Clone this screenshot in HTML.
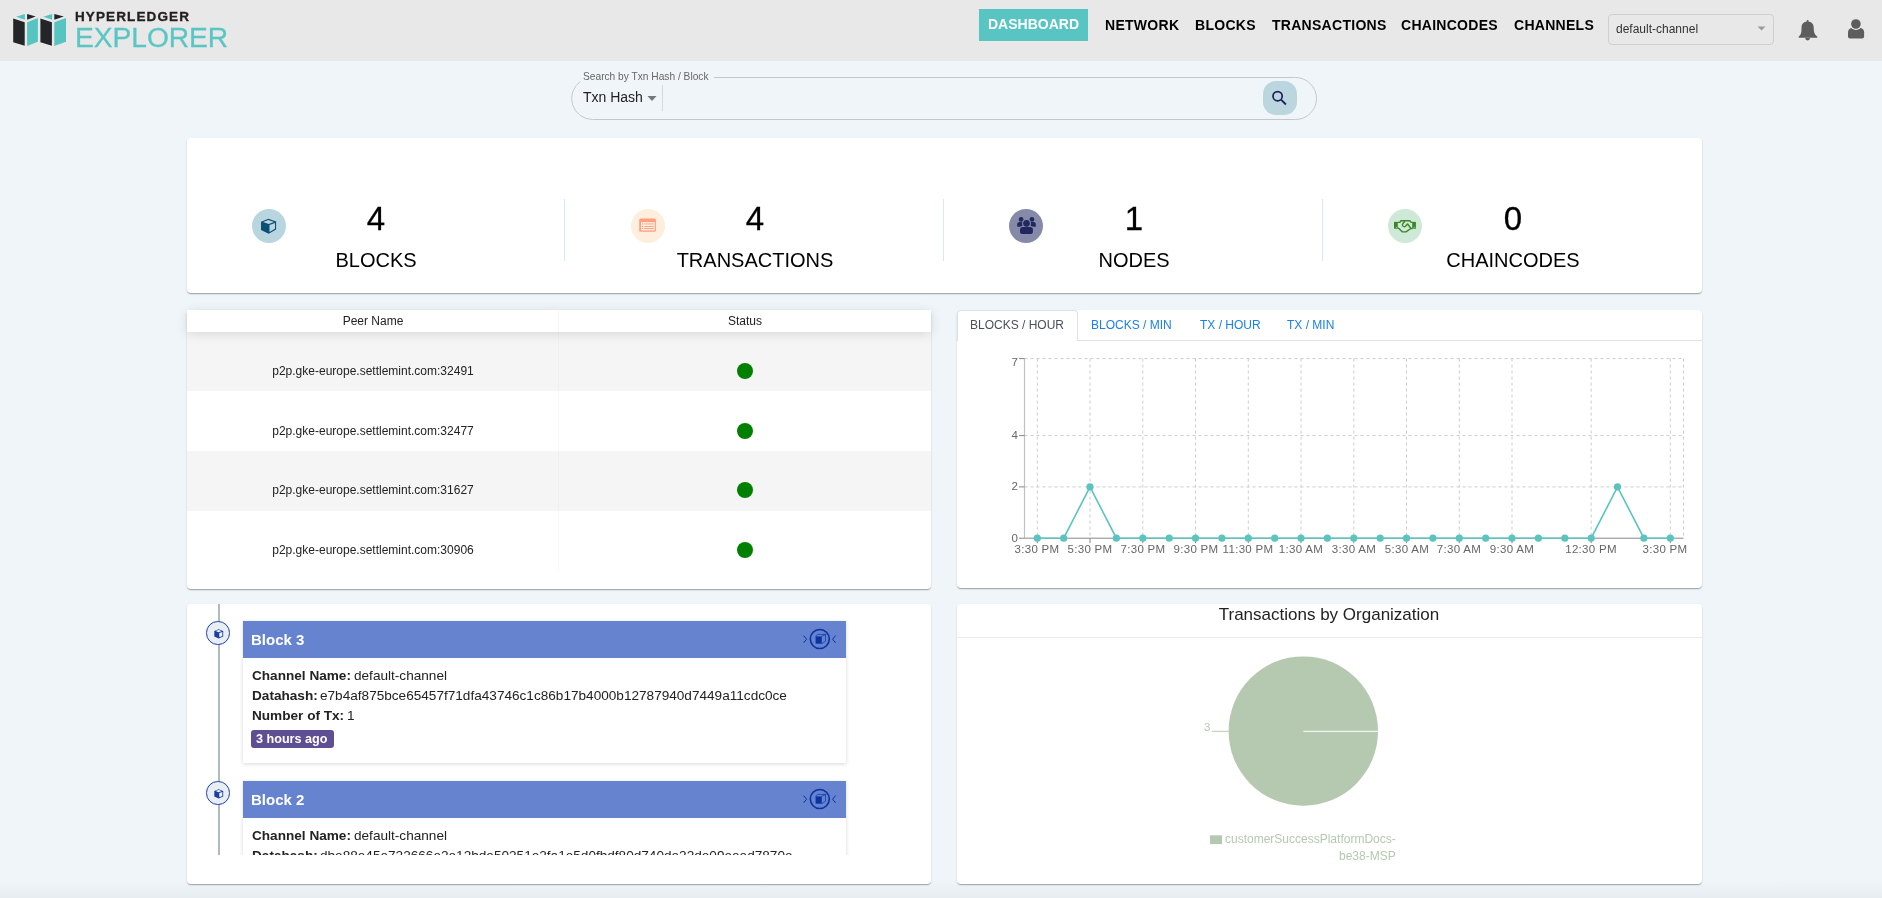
<!DOCTYPE html>
<html><head><meta charset="utf-8"><title>Hyperledger Explorer</title>
<style>
html,body{margin:0;padding:0;}
body{width:1882px;height:898px;overflow:hidden;position:relative;background:#f0f5f9;font-family:"Liberation Sans",sans-serif;}
.t{will-change:transform;position:absolute;line-height:1;white-space:nowrap;font-family:"Liberation Sans",sans-serif;}
.card{position:absolute;background:#fff;border-radius:4px;box-shadow:0 1px 2px 0 rgba(0,0,0,0.16),0 1px 1px 0 rgba(0,0,0,0.12),0 2px 1px -1px rgba(0,0,0,0.12);}
svg{position:absolute;overflow:visible;}
</style></head><body>
<div style="position:absolute;left:0px;top:0px;width:1882px;height:61px;background:#e8e8e8;"></div>
<svg style="left:0;top:0" width="80" height="60" viewBox="0 0 80 60"><polygon points="13.2,18.5 24.7,22.2 24.7,45.7 13.2,42.3" fill="#242528"/><polygon points="27.1,22.2 37.9,18 37.9,41.8 27.1,46" fill="#56c5c2"/><polygon points="16.1,16.8 24.9,13.9 24.9,19.8" fill="#56c5c2"/><polygon points="27.1,13.9 35.7,16.6 27.1,19.8" fill="#242528"/><polygon points="40.4,18.5 51.9,22.2 51.9,45.7 40.4,42.3" fill="#242528"/><polygon points="54.3,22.2 66.0,18 66.0,41.8 54.3,46" fill="#56c5c2"/><polygon points="43.3,16.8 52.099999999999994,13.9 52.099999999999994,19.8" fill="#56c5c2"/><polygon points="54.3,13.9 63.800000000000004,16.6 54.3,19.8" fill="#242528"/></svg>
<div class="t" style="left:75.0px;top:9.9px;font-size:13.5px;color:#231f20;font-weight:bold;letter-spacing:1.12px;-webkit-text-stroke:0.35px #231f20;">HYPERLEDGER</div>
<div class="t" style="left:74.5px;top:23.4px;font-size:28.2px;color:#5ac6c4;letter-spacing:-0.05px;-webkit-text-stroke:0.3px #5ac6c4;">EXPLORER</div>
<div style="position:absolute;left:979px;top:9px;width:109px;height:32px;background:#58c5c2;"></div>
<div class="t" style="left:987.8px;top:16.9px;font-size:14px;color:#fff;font-weight:bold;">DASHBOARD</div>
<div class="t" style="left:1104.9px;top:18.3px;font-size:14px;color:#000;font-weight:bold;letter-spacing:0.28px;">NETWORK</div>
<div class="t" style="left:1194.9px;top:18.3px;font-size:14px;color:#000;font-weight:bold;letter-spacing:0.28px;">BLOCKS</div>
<div class="t" style="left:1271.8px;top:18.3px;font-size:14px;color:#000;font-weight:bold;letter-spacing:0.28px;">TRANSACTIONS</div>
<div class="t" style="left:1401.3px;top:18.3px;font-size:14px;color:#000;font-weight:bold;letter-spacing:0.28px;">CHAINCODES</div>
<div class="t" style="left:1513.5px;top:18.3px;font-size:14px;color:#000;font-weight:bold;letter-spacing:0.28px;">CHANNELS</div>
<div style="position:absolute;left:1608px;top:14px;width:166px;height:31px;box-sizing:border-box;border:1px solid #cfcfcf;border-radius:4px;"></div>
<div class="t" style="left:1616.2px;top:23.2px;font-size:12px;color:#333;">default-channel</div>
<svg style="left:1757px;top:26px" width="10" height="6" viewBox="0 0 10 6"><polygon points="0.5,0.6 8.5,0.6 4.5,4.6" fill="#9a9a9a"/></svg>
<svg style="left:1790px;top:12px" width="85" height="36" viewBox="1790 12 85 36"><circle cx="1807.6" cy="21.0" r="1.0" fill="#5c5d5f"/><path d="M1807.6 21.4 C1811.0 21.4 1813.4 23.6 1813.6 26.6 L1813.9 31.0 C1814.2 33.5 1815.5 35.2 1817.2 36.5 C1817.6 36.9 1817.4 37.7 1816.8 37.7 L1799.2 37.7 C1798.6 37.7 1798.4 36.9 1798.8 36.5 C1800.3 35.2 1801.2 33.5 1801.4 31.0 L1801.6 26.6 C1801.8 23.6 1804.2 21.4 1807.6 21.4 Z" fill="#5c5d5f"/><path d="M1805.2 38.0 A2.4 2.4 0 0 0 1810.0 38.0 Z" fill="#5c5d5f"/><path d="M1848 36.6 L1848 32.2 C1848 29.8 1849.8 28.0 1852.0 28.0 L1860.1 28.0 C1862.3 28.0 1864.1 29.8 1864.1 32.2 L1864.1 36.6 C1864.1 37.7 1863.2 38.6 1862.1 38.6 L1850 38.6 C1848.9 38.6 1848 37.7 1848 36.6 Z" fill="#5c5d5f"/><circle cx="1855.9" cy="24.0" r="5.9" fill="#e8e8e8"/><circle cx="1855.9" cy="24.0" r="4.8" fill="#5c5d5f"/></svg>
<svg style="left:0;top:0" width="1882" height="130" viewBox="0 0 1882 130"><path d="M714 77.5 L1295.5 77.5 A21 21 0 0 1 1295.5 119.5 L592.5 119.5 A21 21 0 0 1 580.3 81.5" fill="none" stroke="#c4c8cc" stroke-width="1"/><line x1="662.5" y1="85" x2="662.5" y2="111" stroke="#d6dadd" stroke-width="1"/><polygon points="647.5,96 656.5,96 652,101" fill="#777"/></svg>
<div class="t" style="left:583.0px;top:72.4px;font-size:10.2px;color:#666;">Search by Txn Hash / Block</div>
<div class="t" style="left:583.4px;top:89.5px;font-size:14px;color:#222;">Txn Hash</div>
<div style="position:absolute;left:1263px;top:81px;width:34px;height:34px;background:#bcd6e0;border-radius:13px;"></div>
<svg style="left:1263px;top:81px" width="34" height="34" viewBox="0 0 34 34"><circle cx="14.6" cy="15.2" r="4.6" fill="none" stroke="#1d1e5a" stroke-width="1.7"/><line x1="18" y1="18.6" x2="22.9" y2="23.5" stroke="#1d1e5a" stroke-width="1.8"/></svg>
<div style="position:absolute;left:0px;top:880px;width:1882px;height:18px;background:linear-gradient(to bottom, rgba(120,130,140,0) 0%, rgba(120,130,140,0.07) 100%);"></div>
<div class="card" style="left:187px;top:138px;width:1515px;height:155px;"></div>
<div style="position:absolute;left:251.9px;top:209.2px;width:33.99999999999997px;height:34.0px;background:#b9d5e0;border-radius:50%;"></div>
<div class="t" style="left:276.4px;width:200px;text-align:center;top:201.7px;font-size:33px;color:#000;-webkit-text-stroke:0.3px #000;">4</div>
<div class="t" style="left:226.4px;width:300px;text-align:center;top:249.6px;font-size:20px;color:#000;">BLOCKS</div>
<div style="position:absolute;left:564.0px;top:198.5px;width:1.0px;height:62.0px;background:#d6e9fb;"></div>
<div style="position:absolute;left:630.6px;top:209.2px;width:34.0px;height:34.0px;background:#fdeedd;border-radius:50%;"></div>
<div class="t" style="left:655.1px;width:200px;text-align:center;top:201.7px;font-size:33px;color:#000;-webkit-text-stroke:0.3px #000;">4</div>
<div class="t" style="left:605.1px;width:300px;text-align:center;top:249.6px;font-size:20px;color:#000;">TRANSACTIONS</div>
<div style="position:absolute;left:942.8px;top:198.5px;width:1.0px;height:62.0px;background:#d6e9fb;"></div>
<div style="position:absolute;left:1009.4px;top:209.2px;width:34.000000000000114px;height:34.0px;background:#858aa8;border-radius:50%;"></div>
<div class="t" style="left:1033.9px;width:200px;text-align:center;top:201.7px;font-size:33px;color:#000;-webkit-text-stroke:0.3px #000;">1</div>
<div class="t" style="left:983.9px;width:300px;text-align:center;top:249.6px;font-size:20px;color:#000;">NODES</div>
<div style="position:absolute;left:1321.5px;top:198.5px;width:1.0px;height:62.0px;background:#d6e9fb;"></div>
<div style="position:absolute;left:1388.2px;top:209.2px;width:34.0px;height:34.0px;background:#cfe9d8;border-radius:50%;"></div>
<div class="t" style="left:1412.7px;width:200px;text-align:center;top:201.7px;font-size:33px;color:#000;-webkit-text-stroke:0.3px #000;">0</div>
<div class="t" style="left:1362.7px;width:300px;text-align:center;top:249.6px;font-size:20px;color:#000;">CHAINCODES</div>
<svg style="left:250px;top:205px" width="40" height="40" viewBox="250 205 40 40"><path d="M268.4 218.7 L276.1 221.4 L276.1 229.4 L268.7 233.7 L261.0 230.1 L261.0 221.7 Z" fill="#0b4f72"/><path d="M268.4 220.0 L274.0 221.9 L268.7 223.9 L263.1 222.0 Z" fill="#b9d5e0"/><path d="M269.5 225.0 L275.0 222.9 L275.0 228.8 L269.5 232.0 Z" fill="#b9d5e0"/></svg>
<svg style="left:630px;top:210px" width="34" height="30" viewBox="630 210 34 30"><rect x="639.2" y="218.6" width="16.7" height="13.2" rx="1.6" fill="#ff9f80"/><rect x="641.0" y="222.1" width="13.8" height="8.3" fill="#fdeedd"/><rect x="644.1" y="223.1" width="9.7" height="1.6" fill="#ffc3a6"/><rect x="644.1" y="226.0" width="9.7" height="0.95" fill="#ff9f80"/><rect x="644.1" y="228.0" width="9.7" height="0.95" fill="#ff9f80"/><rect x="641.9" y="223.1" width="1.1" height="1.6" fill="#ffb090"/><circle cx="642.45" cy="226.45" r="0.6" fill="#ff9f80"/><circle cx="642.45" cy="228.45" r="0.6" fill="#ff9f80"/></svg>
<svg style="left:1010px;top:210px" width="34" height="30" viewBox="1010 210 34 30"><circle cx="1021.1" cy="219.4" r="2.35" fill="#22275e"/><circle cx="1031.9" cy="219.4" r="2.35" fill="#22275e"/><path d="M1017.2 226.7 L1017.2 224.4 C1017.2 223.0 1018.2 222.1 1019.4 222.1 L1022.4 222.1 L1022.4 226.7 Z" fill="#22275e"/><path d="M1035.8 226.7 L1035.8 224.4 C1035.8 223.0 1034.8 222.1 1033.6 222.1 L1030.6 222.1 L1030.6 226.7 Z" fill="#22275e"/><circle cx="1026.5" cy="223.3" r="4.3" fill="#858aa8"/><path d="M1019.0 234.8 L1019.0 229.5 C1019.0 227.4 1020.4 226.0 1022.5 226.0 L1030.5 226.0 C1032.6 226.0 1034.0 227.4 1034.0 229.5 L1034.0 234.8 Z" fill="#858aa8"/><circle cx="1026.5" cy="223.3" r="3.35" fill="#22275e"/><path d="M1020.0 232.0 L1020.0 229.6 C1020.0 228.0 1021.1 227.0 1022.6 227.0 L1030.4 227.0 C1031.9 227.0 1032.9 228.0 1032.9 229.6 L1032.9 232.0 C1032.9 233.1 1032.1 233.9 1031.0 233.9 L1021.9 233.9 C1020.8 233.9 1020.0 233.1 1020.0 232.0 Z" fill="#22275e"/></svg>
<svg style="left:1385px;top:210px" width="36" height="30" viewBox="1385 210 36 30"><rect x="1394.0" y="221.9" width="3.8" height="6.8" fill="#3b8526"/><rect x="1412.2" y="221.9" width="3.7" height="6.8" fill="#3b8526"/><circle cx="1396.3" cy="227.3" r="0.5" fill="#cfe9d8"/><circle cx="1414.1" cy="227.3" r="0.5" fill="#cfe9d8"/><path d="M1397.6 222.4 L1399.9 222.4 L1401.0 220.7 L1409.8 220.7 L1411.2 222.4 L1412.4 222.4" fill="none" stroke="#3b8526" stroke-width="1.4" stroke-linejoin="round"/><path d="M1397.6 228.3 L1398.6 228.3 L1402.5 231.9 L1405.9 231.9 L1410.9 228.5 L1412.4 228.5" fill="none" stroke="#3b8526" stroke-width="1.4" stroke-linejoin="round"/><path d="M1410.9 228.5 L1407.6 223.9 L1405.4 226.2 C1404.6 226.9 1403.6 226.8 1403.0 226.1 L1402.7 225.7 C1402.3 225.1 1402.3 224.4 1402.8 223.8 L1405.0 221.0" fill="none" stroke="#3b8526" stroke-width="1.4" stroke-linejoin="round"/></svg>
<div class="card" style="left:187px;top:310px;width:744px;height:278.5px;overflow:hidden;"><div style="position:absolute;left:0;top:21.5px;width:744px;height:238px;"></div></div>
<div style="position:absolute;left:187px;top:332px;width:744px;height:59px;background:#f5f5f5;"></div>
<div style="position:absolute;left:187px;top:451px;width:744px;height:59.5px;background:#f5f5f5;"></div>
<div style="position:absolute;left:187px;top:310px;width:744px;height:22px;background:#fff;box-shadow:0 2px 12px 0 rgba(0,0,0,0.12);"></div>
<div style="position:absolute;left:558px;top:311px;width:1px;height:21px;background:rgba(0,0,0,0.04);"></div>
<div style="position:absolute;left:558px;top:332px;width:1px;height:238px;background:rgba(0,0,0,0.02);"></div>
<div class="t" style="left:223.2px;width:300px;text-align:center;top:314.9px;font-size:12px;color:#222;">Peer Name</div>
<div class="t" style="left:595.1px;width:300px;text-align:center;top:314.9px;font-size:12px;color:#222;">Status</div>
<div class="t" style="left:192.5px;width:360px;text-align:center;top:365.1px;font-size:12px;color:#222;">p2p.gke-europe.settlemint.com:32491</div>
<div style="position:absolute;left:737.0px;top:362.9px;width:16.200000000000045px;height:16.200000000000045px;background:#008000;border-radius:50%;"></div>
<div class="t" style="left:192.5px;width:360px;text-align:center;top:424.9px;font-size:12px;color:#222;">p2p.gke-europe.settlemint.com:32477</div>
<div style="position:absolute;left:737.0px;top:422.7px;width:16.200000000000045px;height:16.19999999999999px;background:#008000;border-radius:50%;"></div>
<div class="t" style="left:192.5px;width:360px;text-align:center;top:484.4px;font-size:12px;color:#222;">p2p.gke-europe.settlemint.com:31627</div>
<div style="position:absolute;left:737.0px;top:482.2px;width:16.200000000000045px;height:16.19999999999999px;background:#008000;border-radius:50%;"></div>
<div class="t" style="left:192.5px;width:360px;text-align:center;top:544.0px;font-size:12px;color:#222;">p2p.gke-europe.settlemint.com:30906</div>
<div style="position:absolute;left:737.0px;top:541.8px;width:16.200000000000045px;height:16.200000000000045px;background:#008000;border-radius:50%;"></div>
<div class="card" style="left:957px;top:310px;width:745px;height:278px;"></div>
<div style="position:absolute;left:957px;top:340px;width:745px;height:1px;background:#dee2e6;"></div>
<div style="position:absolute;left:957px;top:310px;width:120.5px;height:31px;box-sizing:border-box;border:1px solid #dee2e6;border-bottom:none;border-radius:4px 4px 0 0;background:#fff;"></div>
<div class="t" style="left:970.0px;top:319.2px;font-size:12px;color:#495057;">BLOCKS / HOUR</div>
<div class="t" style="left:1091.3px;top:319.2px;font-size:12px;color:#1a7ff0;">BLOCKS / MIN</div>
<div class="t" style="left:1199.5px;top:319.2px;font-size:12px;color:#1a7ff0;">TX / HOUR</div>
<div class="t" style="left:1287.3px;top:319.2px;font-size:12px;color:#1a7ff0;">TX / MIN</div>
<svg style="left:0;top:0" width="1882" height="898" viewBox="0 0 1882 898"><line x1="1024.5" y1="358.6" x2="1683.5" y2="358.6" stroke="#ccc" stroke-dasharray="3 3"/><line x1="1024.5" y1="435.6" x2="1683.5" y2="435.6" stroke="#ccc" stroke-dasharray="3 3"/><line x1="1024.5" y1="486.9" x2="1683.5" y2="486.9" stroke="#ccc" stroke-dasharray="3 3"/><line x1="1037.3" y1="358.6" x2="1037.3" y2="538.2" stroke="#ccc" stroke-dasharray="3 3"/><line x1="1090.0" y1="358.6" x2="1090.0" y2="538.2" stroke="#ccc" stroke-dasharray="3 3"/><line x1="1142.8" y1="358.6" x2="1142.8" y2="538.2" stroke="#ccc" stroke-dasharray="3 3"/><line x1="1195.5" y1="358.6" x2="1195.5" y2="538.2" stroke="#ccc" stroke-dasharray="3 3"/><line x1="1248.3" y1="358.6" x2="1248.3" y2="538.2" stroke="#ccc" stroke-dasharray="3 3"/><line x1="1301.0" y1="358.6" x2="1301.0" y2="538.2" stroke="#ccc" stroke-dasharray="3 3"/><line x1="1353.8" y1="358.6" x2="1353.8" y2="538.2" stroke="#ccc" stroke-dasharray="3 3"/><line x1="1406.5" y1="358.6" x2="1406.5" y2="538.2" stroke="#ccc" stroke-dasharray="3 3"/><line x1="1459.3" y1="358.6" x2="1459.3" y2="538.2" stroke="#ccc" stroke-dasharray="3 3"/><line x1="1512.0" y1="358.6" x2="1512.0" y2="538.2" stroke="#ccc" stroke-dasharray="3 3"/><line x1="1591.2" y1="358.6" x2="1591.2" y2="538.2" stroke="#ccc" stroke-dasharray="3 3"/><line x1="1670.3" y1="358.6" x2="1670.3" y2="538.2" stroke="#ccc" stroke-dasharray="3 3"/><line x1="1683.5" y1="358.6" x2="1683.5" y2="538.2" stroke="#ccc" stroke-dasharray="3 3"/><line x1="1024.5" y1="358.1" x2="1024.5" y2="538.2" stroke="#c2c2c2" stroke-width="1.2"/><line x1="1024.5" y1="538.2" x2="1683.5" y2="538.2" stroke="#888"/><line x1="1019" y1="358.6" x2="1024.5" y2="358.6" stroke="#888"/><line x1="1019" y1="435.6" x2="1024.5" y2="435.6" stroke="#888"/><line x1="1019" y1="486.9" x2="1024.5" y2="486.9" stroke="#888"/><line x1="1019" y1="538.2" x2="1024.5" y2="538.2" stroke="#888"/><line x1="1037.3" y1="538.2" x2="1037.3" y2="543.2" stroke="#888"/><line x1="1090.0" y1="538.2" x2="1090.0" y2="543.2" stroke="#888"/><line x1="1142.8" y1="538.2" x2="1142.8" y2="543.2" stroke="#888"/><line x1="1195.5" y1="538.2" x2="1195.5" y2="543.2" stroke="#888"/><line x1="1248.3" y1="538.2" x2="1248.3" y2="543.2" stroke="#888"/><line x1="1301.0" y1="538.2" x2="1301.0" y2="543.2" stroke="#888"/><line x1="1353.8" y1="538.2" x2="1353.8" y2="543.2" stroke="#888"/><line x1="1406.5" y1="538.2" x2="1406.5" y2="543.2" stroke="#888"/><line x1="1459.3" y1="538.2" x2="1459.3" y2="543.2" stroke="#888"/><line x1="1512.0" y1="538.2" x2="1512.0" y2="543.2" stroke="#888"/><line x1="1591.2" y1="538.2" x2="1591.2" y2="543.2" stroke="#888"/><line x1="1670.3" y1="538.2" x2="1670.3" y2="543.2" stroke="#888"/><polyline points="1037.3,538.2 1063.7,538.2 1090.0,486.9 1116.4,538.2 1142.8,538.2 1169.2,538.2 1195.5,538.2 1221.9,538.2 1248.3,538.2 1274.7,538.2 1301.0,538.2 1327.4,538.2 1353.8,538.2 1380.2,538.2 1406.5,538.2 1432.9,538.2 1459.3,538.2 1485.7,538.2 1512.0,538.2 1538.4,538.2 1564.8,538.2 1591.2,538.2 1617.5,486.9 1643.9,538.2 1670.3,538.2" fill="none" stroke="#5bc4bf" stroke-width="1.6"/><circle cx="1037.3" cy="538.2" r="3.6" fill="#5bc4bf"/><circle cx="1063.7" cy="538.2" r="3.6" fill="#5bc4bf"/><circle cx="1090.0" cy="486.9" r="3.6" fill="#5bc4bf"/><circle cx="1116.4" cy="538.2" r="3.6" fill="#5bc4bf"/><circle cx="1142.8" cy="538.2" r="3.6" fill="#5bc4bf"/><circle cx="1169.2" cy="538.2" r="3.6" fill="#5bc4bf"/><circle cx="1195.5" cy="538.2" r="3.6" fill="#5bc4bf"/><circle cx="1221.9" cy="538.2" r="3.6" fill="#5bc4bf"/><circle cx="1248.3" cy="538.2" r="3.6" fill="#5bc4bf"/><circle cx="1274.7" cy="538.2" r="3.6" fill="#5bc4bf"/><circle cx="1301.0" cy="538.2" r="3.6" fill="#5bc4bf"/><circle cx="1327.4" cy="538.2" r="3.6" fill="#5bc4bf"/><circle cx="1353.8" cy="538.2" r="3.6" fill="#5bc4bf"/><circle cx="1380.2" cy="538.2" r="3.6" fill="#5bc4bf"/><circle cx="1406.5" cy="538.2" r="3.6" fill="#5bc4bf"/><circle cx="1432.9" cy="538.2" r="3.6" fill="#5bc4bf"/><circle cx="1459.3" cy="538.2" r="3.6" fill="#5bc4bf"/><circle cx="1485.7" cy="538.2" r="3.6" fill="#5bc4bf"/><circle cx="1512.0" cy="538.2" r="3.6" fill="#5bc4bf"/><circle cx="1538.4" cy="538.2" r="3.6" fill="#5bc4bf"/><circle cx="1564.8" cy="538.2" r="3.6" fill="#5bc4bf"/><circle cx="1591.2" cy="538.2" r="3.6" fill="#5bc4bf"/><circle cx="1617.5" cy="486.9" r="3.6" fill="#5bc4bf"/><circle cx="1643.9" cy="538.2" r="3.6" fill="#5bc4bf"/><circle cx="1670.3" cy="538.2" r="3.6" fill="#5bc4bf"/></svg>
<div class="t" style="left:960px;width:58px;text-align:right;top:356.8px;font-size:11.5px;color:#666;">7</div>
<div class="t" style="left:960px;width:58px;text-align:right;top:429.8px;font-size:11.5px;color:#666;">4</div>
<div class="t" style="left:960px;width:58px;text-align:right;top:481.1px;font-size:11.5px;color:#666;">2</div>
<div class="t" style="left:960px;width:58px;text-align:right;top:532.5px;font-size:11.5px;color:#666;">0</div>
<div class="t" style="left:987.3px;width:100px;text-align:center;top:543.5px;font-size:11.5px;color:#666;letter-spacing:0.3px;">3:30 PM</div>
<div class="t" style="left:1040.0px;width:100px;text-align:center;top:543.5px;font-size:11.5px;color:#666;letter-spacing:0.3px;">5:30 PM</div>
<div class="t" style="left:1092.8px;width:100px;text-align:center;top:543.5px;font-size:11.5px;color:#666;letter-spacing:0.3px;">7:30 PM</div>
<div class="t" style="left:1145.5px;width:100px;text-align:center;top:543.5px;font-size:11.5px;color:#666;letter-spacing:0.3px;">9:30 PM</div>
<div class="t" style="left:1198.3px;width:100px;text-align:center;top:543.5px;font-size:11.5px;color:#666;letter-spacing:0.3px;">11:30 PM</div>
<div class="t" style="left:1251.0px;width:100px;text-align:center;top:543.5px;font-size:11.5px;color:#666;letter-spacing:0.3px;">1:30 AM</div>
<div class="t" style="left:1303.8px;width:100px;text-align:center;top:543.5px;font-size:11.5px;color:#666;letter-spacing:0.3px;">3:30 AM</div>
<div class="t" style="left:1356.5px;width:100px;text-align:center;top:543.5px;font-size:11.5px;color:#666;letter-spacing:0.3px;">5:30 AM</div>
<div class="t" style="left:1409.3px;width:100px;text-align:center;top:543.5px;font-size:11.5px;color:#666;letter-spacing:0.3px;">7:30 AM</div>
<div class="t" style="left:1462.0px;width:100px;text-align:center;top:543.5px;font-size:11.5px;color:#666;letter-spacing:0.3px;">9:30 AM</div>
<div class="t" style="left:1541.2px;width:100px;text-align:center;top:543.5px;font-size:11.5px;color:#666;letter-spacing:0.3px;">12:30 PM</div>
<div class="t" style="left:1615.4px;width:100px;text-align:center;top:543.5px;font-size:11.5px;color:#666;letter-spacing:0.3px;">3:30 PM</div>
<div class="card" style="left:187px;top:604px;width:744px;height:280px;"></div>
<div style="position:absolute;left:187px;top:604px;width:744px;height:251px;overflow:hidden;"><div style="position:absolute;left:31.2px;top:0;width:2px;height:251px;background:#adbac4;"></div><div style="position:absolute;left:19.1px;top:17.2px;width:21.5px;height:21.5px;border:1.6px solid #1b3ea5;border-radius:50%;background:#e9eef3;"></div><svg style="left:26.6px;top:24.6px" width="10" height="10" viewBox="0 0 10 10"><path d="M4.7 0.2 L9.2 1.9 L9.2 7.4 L4.7 9.6 L0.3 7.4 L0.3 1.9 Z" fill="#1b3ea5"/><path d="M5.3 4.1 L8.3 2.9 L8.3 6.9 L5.3 8.3 Z" fill="#f4f7fa"/><path d="M4.7 1.0 L7.8 2.1 L4.7 3.3 L1.6 2.1 Z" fill="#f4f7fa"/></svg><div style="position:absolute;left:56px;top:17.0px;width:603px;height:142px;background:#fff;box-shadow:0 1px 4px rgba(0,0,0,0.16);"></div><div style="position:absolute;left:56px;top:17.0px;width:603px;height:37px;background:#6683d0;"></div><div style="position:absolute;left:19.1px;top:177.2px;width:21.5px;height:21.5px;border:1.6px solid #1b3ea5;border-radius:50%;background:#e9eef3;"></div><svg style="left:26.6px;top:184.6px" width="10" height="10" viewBox="0 0 10 10"><path d="M4.7 0.2 L9.2 1.9 L9.2 7.4 L4.7 9.6 L0.3 7.4 L0.3 1.9 Z" fill="#1b3ea5"/><path d="M5.3 4.1 L8.3 2.9 L8.3 6.9 L5.3 8.3 Z" fill="#f4f7fa"/><path d="M4.7 1.0 L7.8 2.1 L4.7 3.3 L1.6 2.1 Z" fill="#f4f7fa"/></svg><div style="position:absolute;left:56px;top:177.0px;width:603px;height:142px;background:#fff;box-shadow:0 1px 4px rgba(0,0,0,0.16);"></div><div style="position:absolute;left:56px;top:177.0px;width:603px;height:37px;background:#6683d0;"></div></div>
<div style="position:absolute;left:187px;top:604px;width:744px;height:251px;overflow:hidden;"><div class="t" style="left:64.3px;top:28.0px;font-size:15px;color:#fff;font-weight:bold;">Block 3</div>
<div class="t" style="left:64.5px;top:65.1px;font-size:13.6px;color:#222;font-weight:bold;">Channel Name:</div>
<div class="t" style="left:166.5px;top:65.1px;font-size:13.6px;color:#222;">default-channel</div>
<div class="t" style="left:64.5px;top:85.3px;font-size:13.6px;color:#222;font-weight:bold;">Datahash:</div>
<div class="t" style="left:133.0px;top:85.3px;font-size:13.6px;color:#222;">e7b4af875bce65457f71dfa43746c1c86b17b4000b12787940d7449a11cdc0ce</div>
<div class="t" style="left:64.5px;top:105.3px;font-size:13.6px;color:#222;font-weight:bold;">Number of Tx:</div>
<div class="t" style="left:160.0px;top:105.3px;font-size:13.6px;color:#222;">1</div>
<div style="position:absolute;left:64.1px;top:125.5px;width:83px;height:18.5px;background:#5e4f93;border-radius:3px;"></div><div class="t" style="left:69.0px;top:129.3px;font-size:12.6px;color:#fff;font-weight:bold;">3 hours ago</div>
<svg style="left:613px;top:22px" width="40" height="28" viewBox="0 0 40 28"><path d="M3.6 9.6 L6.6 13.2 L3.6 16.8" fill="none" stroke="#0b33a0" stroke-width="1"/><circle cx="19.8" cy="13.0" r="9.5" fill="none" stroke="#0b33a0" stroke-width="1.6"/><path d="M15.6 10.4 L17.9 8.4 L25.5 8.4 L25.5 15.2 L21.8 17.7 M21.8 10.4 L25.5 8.4" fill="none" stroke="#0b33a0" stroke-width="0.7"/><rect x="15.6" y="10.4" width="6.2" height="7.3" fill="#0b33a0"/><path d="M35.6 9.6 L32.6 13.2 L35.6 16.8" fill="none" stroke="#0b33a0" stroke-width="1"/></svg><div class="t" style="left:64.3px;top:188.0px;font-size:15px;color:#fff;font-weight:bold;">Block 2</div>
<div class="t" style="left:64.5px;top:225.1px;font-size:13.6px;color:#222;font-weight:bold;">Channel Name:</div>
<div class="t" style="left:166.5px;top:225.1px;font-size:13.6px;color:#222;">default-channel</div>
<div class="t" style="left:64.5px;top:245.3px;font-size:13.6px;color:#222;font-weight:bold;">Datahash:</div>
<div class="t" style="left:133.0px;top:245.3px;font-size:13.6px;color:#222;">dbe88e45e722666e2e12bde50251e2fa1e5d0fbdf80d740de22de09eeed7870e</div>
<div class="t" style="left:64.5px;top:265.3px;font-size:13.6px;color:#222;font-weight:bold;">Number of Tx:</div>
<div class="t" style="left:160.0px;top:265.3px;font-size:13.6px;color:#222;">1</div>
<div style="position:absolute;left:64.1px;top:285.5px;width:83px;height:18.5px;background:#5e4f93;border-radius:3px;"></div><div class="t" style="left:69.0px;top:289.3px;font-size:12.6px;color:#fff;font-weight:bold;">3 hours ago</div>
<svg style="left:613px;top:182px" width="40" height="28" viewBox="0 0 40 28"><path d="M3.6 9.6 L6.6 13.2 L3.6 16.8" fill="none" stroke="#0b33a0" stroke-width="1"/><circle cx="19.8" cy="13.0" r="9.5" fill="none" stroke="#0b33a0" stroke-width="1.6"/><path d="M15.6 10.4 L17.9 8.4 L25.5 8.4 L25.5 15.2 L21.8 17.7 M21.8 10.4 L25.5 8.4" fill="none" stroke="#0b33a0" stroke-width="0.7"/><rect x="15.6" y="10.4" width="6.2" height="7.3" fill="#0b33a0"/><path d="M35.6 9.6 L32.6 13.2 L35.6 16.8" fill="none" stroke="#0b33a0" stroke-width="1"/></svg></div>
<div class="card" style="left:957px;top:604px;width:745px;height:280px;"></div>
<div style="position:absolute;left:957px;top:637px;width:745px;height:1px;background:#ececec;"></div>
<div class="t" style="left:1078.9px;width:500px;text-align:center;top:606.2px;font-size:17px;color:#222;">Transactions by Organization</div>
<svg style="left:0;top:0" width="1882" height="898" viewBox="0 0 1882 898"><circle cx="1303.3" cy="731.1" r="74.7" fill="#b5c9b0"/><line x1="1303.3" y1="731.3" x2="1378.2" y2="731.3" stroke="#fff" stroke-width="1"/><line x1="1211.8" y1="731.3" x2="1228.6" y2="731.3" stroke="#b5c9b0" stroke-width="1"/><rect x="1210" y="835.3" width="12" height="8.8" fill="#b5c9b0"/></svg>
<div class="t" style="left:1204.0px;top:721.9px;font-size:11.5px;color:#b5c9b0;">3</div>
<div class="t" style="left:1224.6px;top:832.7px;font-size:12px;color:#b5c9b0;">customerSuccessPlatformDocs-</div>
<div class="t" style="left:1338.5px;top:849.6px;font-size:12px;color:#b5c9b0;">be38-MSP</div>
</body></html>
